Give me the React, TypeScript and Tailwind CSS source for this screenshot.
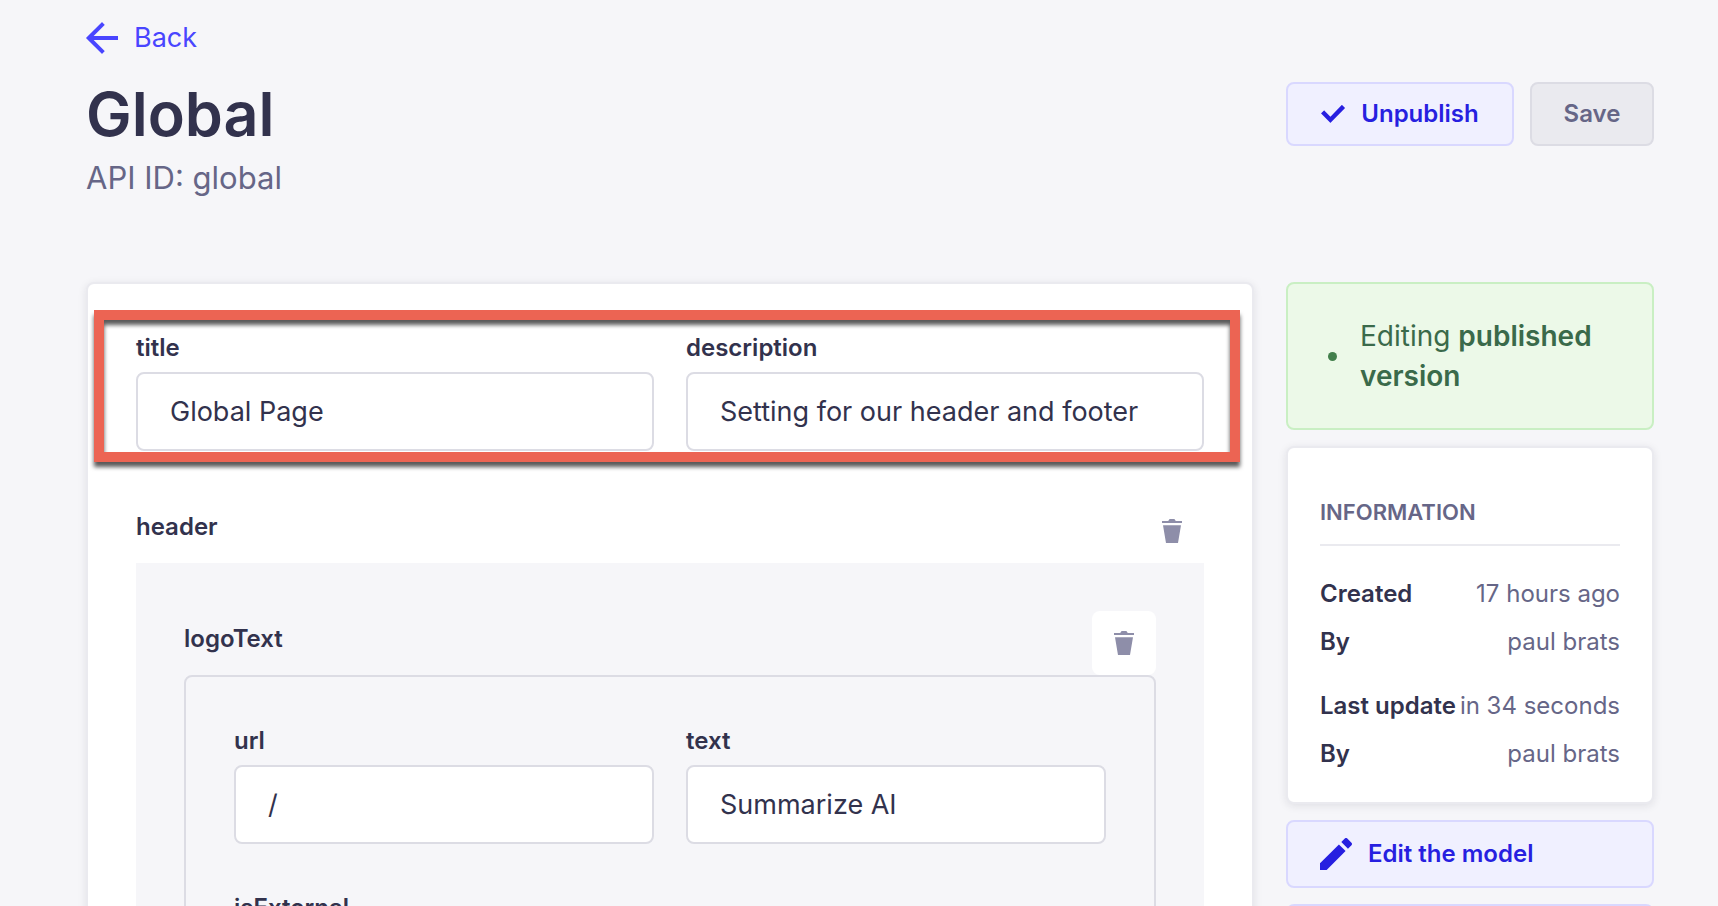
import { useId, type ReactNode } from "react";

function Icon({ d, className }: { d: string; className: string }) {
  return (
    <svg viewBox="0 0 24 24" fill="currentColor" aria-hidden="true" className={className}>
      <path d={d} />
    </svg>
  );
}

const ARROW_LEFT =
  "M24 13.3a.2.2 0 01-.2.2H5.74l8.239 8.239a.2.2 0 010 .282L12.14 23.86a.2.2 0 01-.282 0L.14 12.14a.2.2 0 010-.282L11.86.14a.2.2 0 01.282 0L13.98 1.98a.2.2 0 010 .282L5.74 10.5H23.8c.11 0 .2.09.2.2v2.6z";
const CHECK =
  "M20.727 2.97a.2.2 0 01.286 0l2.85 2.89a.2.2 0 010 .28L9.554 20.854a.2.2 0 01-.285 0l-9.13-9.243a.2.2 0 010-.281l2.85-2.892a.2.2 0 01.284 0l6.14 6.209L20.726 2.97z";
const TRASH =
  "M3.236 6.149a.2.2 0 00-.197.233L6 24h12l2.96-17.618a.2.2 0 00-.196-.233H3.236zM21.8 1.983c.11 0 .2.09.2.2v1.584a.2.2 0 01-.2.2H2.2a.2.2 0 01-.2-.2V2.183c0-.11.09-.2.2-.2h5.511c.9 0 1.631-1.09 1.631-1.983h5.316c0 .894.73 1.983 1.631 1.983H21.8z";
const PENCIL =
  "M23.604 3.514c.528.528.528 1.36 0 1.887l-2.622 2.607-4.99-4.99L18.6.396a1.322 1.322 0 011.887 0l3.118 3.118zM0 24v-4.99l14.2-14.2 4.99 4.99L4.99 24H0z";

function Field({ label, value }: { label: string; value: string }) {
  const id = useId();
  return (
    <div className="flex min-w-0 flex-col gap-2">
      <label htmlFor={id} className="text-2xl/8 font-semibold">
        {label}
      </label>
      <input
        id={id}
        type="text"
        defaultValue={value}
        className="h-[79px] w-full rounded-lg border-2 border-[#dcdce4] bg-white px-8 text-[27px] outline-none focus:border-[#4945ff]"
      />
    </div>
  );
}

function ComponentHeading({ name }: { name: string }) {
  return (
    <div className="flex items-center justify-between">
      <h2 className="pb-2 text-2xl/8 font-semibold">{name}</h2>
      <button
        type="button"
        aria-label={`Delete ${name}`}
        className="flex size-16 items-center justify-center rounded-lg bg-white text-[#8e8ea9]"
      >
        <Icon d={TRASH} className="size-6" />
      </button>
    </div>
  );
}

function InfoRow({ term, children }: { term: string; children: ReactNode }) {
  return (
    <div className="flex justify-between text-2xl/8 whitespace-nowrap">
      <dt className="font-semibold">{term}</dt>
      <dd className="text-[#666687]">{children}</dd>
    </div>
  );
}

export default function App() {
  const externalId = useId();
  return (
    <div className="h-screen overflow-hidden bg-[#f6f6f9] pt-[18px] pr-16 pl-[86px] font-['Inter',sans-serif] text-[#32324d]">
      <header className="mb-20">
        <a href="#" className="inline-flex items-center gap-4 align-top text-[27px] leading-10 text-[#4945ff]">
          <Icon d={ARROW_LEFT} className="size-8" />
          Back
        </a>
        <div className="mt-4 flex items-center justify-between">
          <h1 className="text-[61px] leading-20 font-semibold">Global</h1>
          <div className="flex gap-4">
            <button
              type="button"
              className="flex h-16 min-w-57 items-center justify-center gap-4 rounded-lg border-2 border-[#d9d8ff] bg-[#f0f0ff] px-7 text-2xl font-semibold text-[#271fe0]"
            >
              <Icon d={CHECK} className="size-6" />
              Unpublish
            </button>
            <button
              type="button"
              disabled
              className="h-16 min-w-31 rounded-lg border-2 border-[#dcdce4] bg-[#eaeaef] px-7 text-2xl font-semibold text-[#666687]"
            >
              Save
            </button>
          </div>
        </div>
        <p className="text-[31px] leading-12 text-[#666687]">API ID: global</p>
      </header>

      <div className="grid grid-cols-12 gap-8">
        <main className="col-span-9 flex flex-col gap-12 rounded-lg border-2 border-[#eaeaef] bg-white p-12 shadow-[0_2px_8px_rgba(33,33,52,0.1)]">
          <div className="relative grid grid-cols-2 gap-8">
            <Field label="title" value="Global Page" />
            <Field label="description" value="Setting for our header and footer" />
            <div className="pointer-events-none absolute -top-[22px] -right-9 -bottom-[11px] -left-[42px] border-10 border-[#ec6453] drop-shadow-[0_5px_2px_rgba(0,0,0,0.65)]" />
          </div>

          <section>
            <ComponentHeading name="header" />
            <div className="bg-[#f6f6f9] p-12">
              <ComponentHeading name="logoText" />
              <div className="grid grid-cols-2 gap-x-8 gap-y-12 rounded-lg border-2 border-[#dcdce4] p-12">
                <Field label="url" value="/" />
                <Field label="text" value="Summarize AI" />
                <div className="flex flex-col items-start gap-2">
                  <label htmlFor={externalId} className="text-2xl/8 font-semibold">
                    isExternal
                  </label>
                  <input id={externalId} type="checkbox" className="size-8" />
                </div>
              </div>
            </div>
          </section>
        </main>

        <aside className="col-span-3 flex flex-col gap-4">
          <div className="flex items-center gap-4 rounded-lg border-2 border-[#c9efc3] bg-[#ecf9e8] p-8 text-[28px] leading-10 text-[#3a6a4a]">
            <span className="flex w-6 shrink-0 justify-center">
              <span className="size-[9px] rounded-full bg-[#43804c]" />
            </span>
            <p>
              Editing <strong className="font-semibold">published version</strong>
            </p>
          </div>

          <section className="rounded-lg border-2 border-[#eaeaef] bg-white px-8 pt-12 pb-8 shadow-[0_2px_8px_rgba(33,33,52,0.1)]">
            <h2 className="border-b-2 border-[#eaeaef] pb-4 text-[22px] leading-8 font-semibold text-[#666687] uppercase">
              Information
            </h2>
            <dl className="mt-8 flex flex-col gap-8">
              <div className="flex flex-col gap-4">
                <InfoRow term="Created">17 hours ago</InfoRow>
                <InfoRow term="By">paul brats</InfoRow>
              </div>
              <div className="flex flex-col gap-4">
                <InfoRow term="Last update">in 34 seconds</InfoRow>
                <InfoRow term="By">paul brats</InfoRow>
              </div>
            </dl>
          </section>

          <a
            href="#"
            className="flex h-[68px] items-center gap-4 rounded-lg border-2 border-[#d9d8ff] bg-[#f0f0ff] px-8 text-2xl font-semibold text-[#271fe0]"
          >
            <Icon d={PENCIL} className="size-8" />
            Edit the model
          </a>
          <a
            href="#"
            aria-label="Configure the view"
            className="h-[68px] rounded-lg border-2 border-[#d9d8ff] bg-[#f0f0ff]"
          />
        </aside>
      </div>
    </div>
  );
}
